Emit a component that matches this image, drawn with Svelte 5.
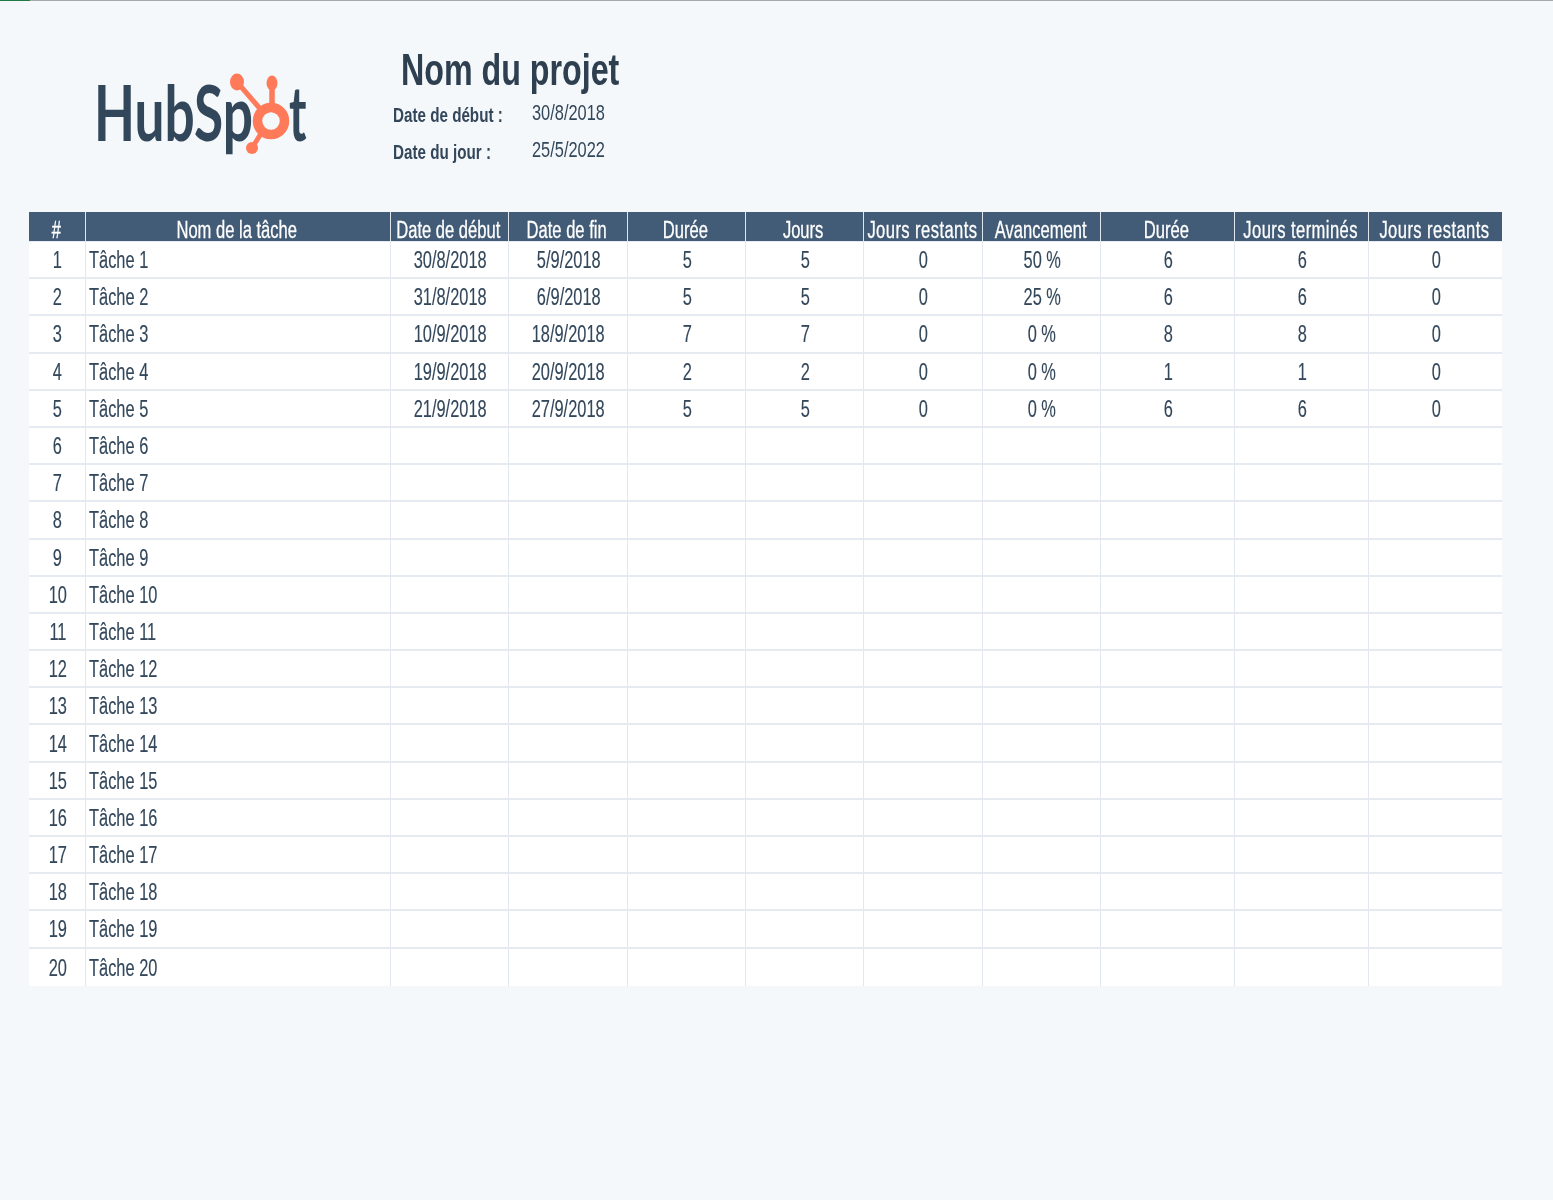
<script lang="ts">
	const columns = [
		'#',
		'Nom de la tâche',
		'Date de début',
		'Date de fin',
		'Durée',
		'Jours',
		'Jours restants',
		'Avancement',
		'Durée',
		'Jours terminés',
		'Jours restants'
	];

	// only the first five tasks have been filled in
	const filled = [
		['30/8/2018', '5/9/2018', '5', '5', '0', '50 %', '6', '6', '0'],
		['31/8/2018', '6/9/2018', '5', '5', '0', '25 %', '6', '6', '0'],
		['10/9/2018', '18/9/2018', '7', '7', '0', '0 %', '8', '8', '0'],
		['19/9/2018', '20/9/2018', '2', '2', '0', '0 %', '1', '1', '0'],
		['21/9/2018', '27/9/2018', '5', '5', '0', '0 %', '6', '6', '0']
	];

	const rows = Array.from({ length: 20 }, (_, i) => ({
		n: i + 1,
		name: `Tâche ${i + 1}`,
		cells: filled[i] ?? Array(9).fill('')
	}));
</script>

<div class="sheet">
	<div class="topbar"><div class="tab"></div></div>

	<header class="head">
		<div class="logo" aria-label="HubSpot">
			<span class="hub">HubSp</span>
			<svg class="sprocket" viewBox="0 0 66 92" aria-hidden="true">
				<g fill="#ff7a59" stroke="#ff7a59">
					<circle cx="46" cy="51" r="13.5" fill="none" stroke-width="9.5" />
					<path d="M12 12 37 41" fill="none" stroke-width="5" />
					<path d="M47 14V36" fill="none" stroke-width="5.5" />
					<path d="M27 78 37 62" fill="none" stroke-width="5" />
					<ellipse cx="12" cy="12" rx="7" ry="8.5" stroke="none" />
					<ellipse cx="47" cy="13" rx="5.5" ry="7.5" stroke="none" />
					<circle cx="27" cy="78" r="6" stroke="none" />
				</g>
			</svg>
			<span class="t">t</span>
		</div>

		<div class="project">
			<h1><span class="sq">Nom du projet</span></h1>
			<div class="meta">
				<b><span class="sq">Date de début :</span></b>
				<span class="value"><span class="sq">30/8/2018</span></span>
				<b><span class="sq">Date du jour :</span></b>
				<span class="value"><span class="sq">25/5/2022</span></span>
			</div>
		</div>
	</header>

	<div class="table">
		{#each columns as col}
			<div class="th"><span class="sq" class:wide={col.startsWith('Jours ')}>{col}</span></div>
		{/each}

		{#each rows as row}
			<div class="td"><span class="sq">{row.n}</span></div>
			<div class="td name"><span class="sq">{row.name}</span></div>
			{#each row.cells as cell}
				<div class="td"><span class="sq">{cell}</span></div>
			{/each}
		{/each}
	</div>
</div>

<style>
	:global(body) {
		margin: 0;
		background: #f5f8fb;
	}

	.sheet {
		height: 1200px;
		font-family: 'Liberation Sans', Arial, sans-serif;
		color: #33475b;
		filter: blur(0.35px);
	}

	.topbar {
		height: 1px;
		background: #a6a9ab;
	}

	.tab {
		width: 30px;
		height: 1px;
		background: #1f7a45;
	}

	.sq {
		display: inline-block;
		white-space: pre;
		transform: scaleX(0.745);
	}

	.head {
		display: flex;
		height: 211px;
		padding-left: 94px;
		box-sizing: border-box;
	}

	.logo {
		display: flex;
		align-items: flex-start;
		width: 299px;
		padding-top: 73px;
		box-sizing: border-box;
		font-family: Lato, sans-serif;
		font-size: 76px;
		line-height: 76px;
		font-weight: 700;
		color: #33475b;
	}

	.hub,
	.t {
		display: block;
		white-space: pre;
		transform: scaleX(0.7);
		transform-origin: left;
	}

	.hub {
		width: 158px;
	}

	.sprocket {
		flex: none;
		width: 66px;
		height: 92px;
		margin: -4px 0 0 -27px;
	}

	.t {
		width: 16px;
		margin-left: -2px;
		transform: scaleX(0.62);
	}

	.project {
		padding-top: 47px;
	}

	.project .sq {
		transform-origin: left;
	}

	h1 {
		margin: 0 0 0 8px;
		font-size: 44px;
		line-height: 44px;
		font-weight: 700;
		color: #2e3f50;
	}

	h1 .sq {
		transform: scaleX(0.732);
	}

	.meta {
		display: grid;
		grid-template-columns: 139px auto;
		grid-auto-rows: 37px;
		margin-top: 2px;
		align-items: center;
	}

	.meta b {
		font-size: 20px;
		line-height: 24px;
		padding-top: 4px;
	}

	.meta b .sq {
		transform: scaleX(0.76);
	}

	.value {
		font-size: 22px;
		line-height: 24px;
	}

	.table {
		display: grid;
		grid-template-columns: 57px 305px 118px 119px 118px 118px 119px 118px 134px 134px 133px;
		grid-template-rows: 30px;
		grid-auto-rows: 37.2px;
		width: 1473px;
		margin-left: 29px;
	}

	.th {
		display: flex;
		justify-content: center;
		align-items: flex-end;
		padding-right: 2px;
		background: #425b76;
		border-right: 1px solid #dfe5ec;
		border-bottom: 1px solid #e6eaf1;
		color: #fff;
		font-size: 23px;
		line-height: 22px;
		-webkit-text-stroke: 0.3px #fff;
	}

	.th .sq {
		transform: scaleX(0.72);
	}

	.th .sq.wide {
		letter-spacing: 0.6px;
	}

	.td {
		display: flex;
		justify-content: center;
		align-items: center;
		padding: 1px 0 0 1px;
		background: #fff;
		border-right: 1px solid #e3e7ef;
		border-bottom: 2px solid #e6eaf1;
		font-size: 23px;
		line-height: 24px;
		min-width: 0;
		-webkit-text-stroke: 0.15px #33475b;
	}

	.td .sq {
		transform: scaleX(0.713);
	}

	.td.name {
		justify-content: flex-start;
		padding-left: 3px;
	}

	.td.name .sq {
		transform-origin: left;
	}

	.th:nth-child(11),
	.td:nth-child(11n) {
		border-right: 0;
	}

	.td:nth-last-child(-n + 11) {
		border-bottom: 0;
	}
</style>
